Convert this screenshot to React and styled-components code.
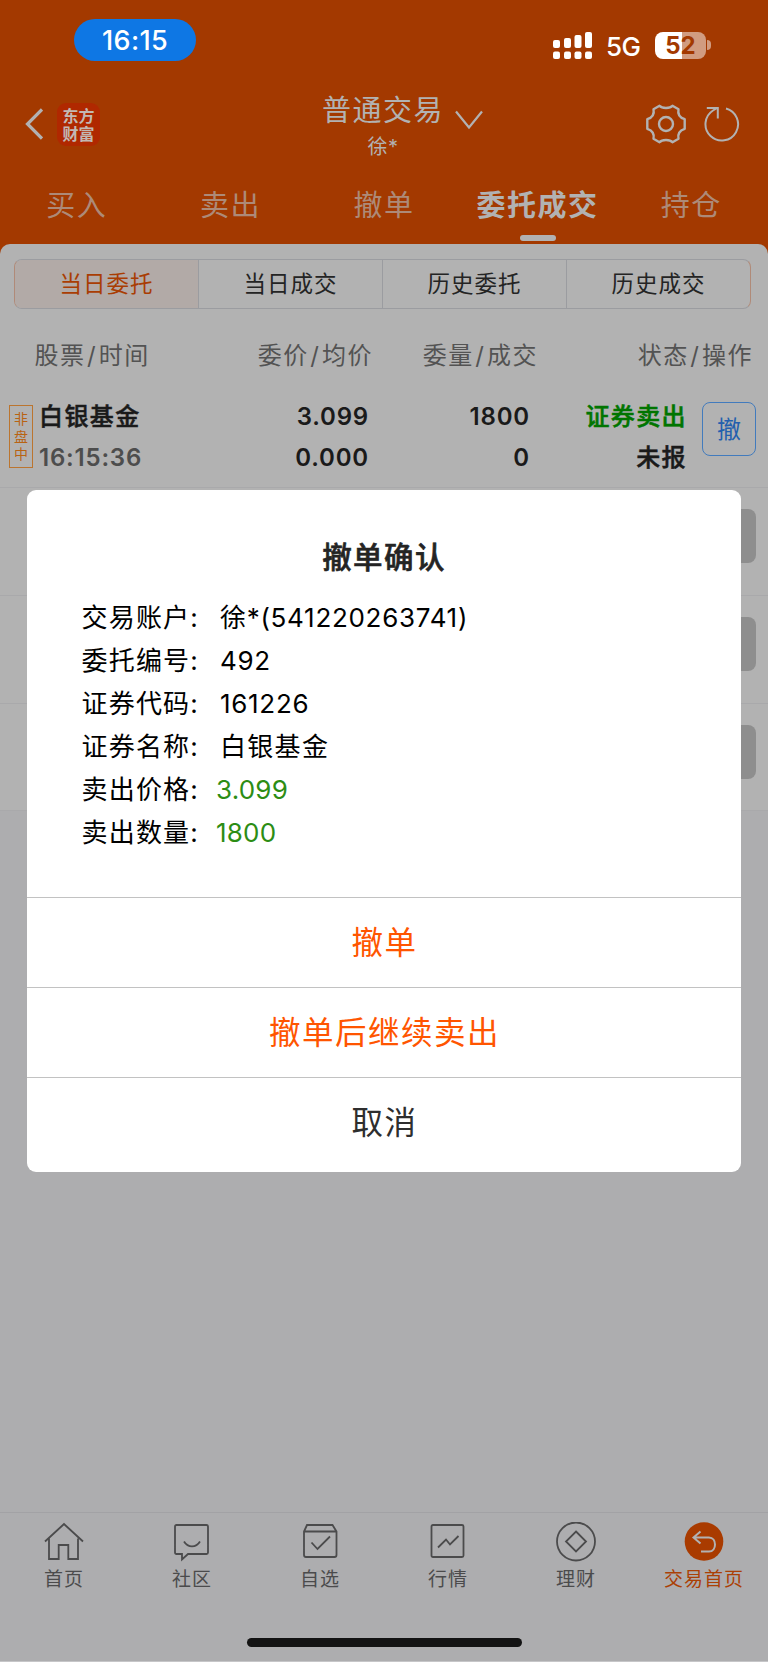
import React from 'react'
import styled, { createGlobalStyle } from 'styled-components';


const GlobalStyle = createGlobalStyle`
    * {
        box-sizing:border-box;
    }
    body {
        margin:0;
        font-family:Inter, "Noto Sans CJK SC", sans-serif;
        background-color:#adadaf;
    }
`;

const Container = styled.div`
    position:relative;
    width:768px;
    height:1662px;
    display:flex;
    flex-direction:column;
    overflow:hidden;
    background-color:#adadaf;
    border-bottom:1px solid #c6c6c8;
`;

const Header = styled.div`
    height:254px;
    flex-shrink:0;
    background-color:#a33900;
`;

const StatusBar = styled.div`
    height:80px;
    display:flex;
    justify-content:space-between;
    padding:19px 57px 0 74px;
    color:white;
`;

const Clock = styled.div`
    width:122px;
    height:42px;
    border-radius:21px;
    background-color:#0e77e4;
    display:flex;
    align-items:center;
    justify-content:center;
    font-size:27px;
    font-weight:500;
    letter-spacing:0.3px;
`;

const StatusRight = styled.div`
    display:flex;
    align-items:center;
    height:52px;
`;

const Network = styled.span`
    font-size:26px;
    font-weight:500;
    width:35px;
    margin:3px 14px 0 13px;
    letter-spacing:-0.5px;
    white-space:nowrap;
`;

const Battery = styled.div`
    width:51px;
    height:27px;
    border-radius:8px;
    background:linear-gradient(to right, white 53%, #d19c80 53%);
    color:#a33900;
    font-size:24px;
    font-weight:700;
    line-height:27px;
    text-align:center;
`;

const BatteryTip = styled.div`
    width:4px;
    height:10px;
    margin-left:1px;
    border-radius:0 5px 5px 0;
    background-color:#d19c80;
`;

const TopNav = styled.div`
    height:84px;
    display:grid;
    grid-template-columns:1fr auto 1fr;
    padding:0 28px 0 25px;
`;

const NavLeft = styled.div`
    display:flex;
    align-items:center;
    gap:14px;
    padding-top:4px;
`;

const Logo = styled.div`
    width:43px;
    height:43px;
    border-radius:9px;
    background-color:#b02800;
    color:#c2b8b3;
    font-family:"Noto Sans CJK SC", sans-serif;
    font-size:16px;
    font-weight:700;
    line-height:18px;
    padding-top:3px;
    text-align:center;
`;

const NavTitle = styled.div`
    display:flex;
    color:#b2b2b2;
    padding-left:40px;
`;

const TitleText = styled.div`
    text-align:center;
    font-size:29px;
    line-height:40px;
    letter-spacing:1.5px;
    padding-top:11px;
`;

const SubTitle = styled.div`
    font-size:20px;
    line-height:30px;
    margin-top:1px;
    letter-spacing:0.5px;
`;

const ChevronBox = styled.div`
    padding:30px 0 0 11px;
`;

const NavRight = styled.div`
    display:flex;
    align-items:center;
    justify-content:flex-end;
    gap:18px;
    padding-top:4px;
`;

const Tabs = styled.div`
    display:grid;
    grid-template-columns:repeat(5, 1fr);
    height:80px;
`;

const Tab = styled.div`
    display:flex;
    flex-direction:column;
    align-items:center;
    padding-top:18.5px;
    font-size:29px;
    line-height:46px;
    letter-spacing:1.5px;
    color:${props=>props.$active ? "#b2b2b2" : "#ad8a78"};
    font-weight:${props=>props.$active ? 700 : 400};
`;

const Indicator = styled.div`
    width:36px;
    height:6px;
    margin-top:6.5px;
    border-radius:3px;
    background-color:#b2b2b2;
`;

const Sheet = styled.div`
    display:flex;
    flex-direction:column;
    margin-top:-10px;
    padding-top:15px;
    height:567px;
    flex-shrink:0;
    border-radius:10px 10px 0 0;
    background-color:#b2b2b2;
`;

const Segments = styled.div`
    display:flex;
    height:50px;
    flex-shrink:0;
    margin:0 17px 0 14px;
    border:1px solid #9b9ca0;
    border-left-color:#b08a78;
    border-right-color:#b08a78;
    border-radius:8px;
    overflow:hidden;
`;

const Segment = styled.div`
    flex:1;
    font-size:22.5px;
    line-height:48px;
    letter-spacing:1px;
    text-align:center;
    color:${props=>props.$active ? "#a93d03" : "#242424"};
    background-color:${props=>props.$active ? "#b2aaa7" : "transparent"};
    border-left:${props=>props.$first ? "none" : "1px solid #9b9ca0"};
`;

const TableHead = styled.div`
    display:grid;
    grid-template-columns:175px 163.5px 165px 215px;
    height:71.5px;
    flex-shrink:0;
    padding:18.5px 0 0 34.5px;
    font-size:24px;
    line-height:56px;
    letter-spacing:1.5px;
    color:#535353;
    white-space:nowrap;
`;

const HeadCell = styled.div`
    text-align:${props=>props.$left ? "left" : "right"};
`;

const Slash = styled.span`
    margin:0 1.5px;
`;

const Orders = styled.div`
    flex-shrink:0;
`;

const Order = styled.div`
    display:grid;
    grid-template-columns:24px 150px 185px 161px 157px 70px;
    height:107.7px;
    padding-left:9px;
    border-bottom:1px solid #a9a9ab;
`;

const Phase = styled.div`
    width:24px;
    height:63px;
    margin-top:24px;
    padding-top:4.5px;
    border:1.5px solid #bb752f;
    color:#b96312;
    font-size:14px;
    line-height:17.5px;
    text-align:center;
`;

const Cell = styled.div`
    padding-top:15px;
    padding-left:${props=>props.$left ? "6px" : "0"};
    text-align:${props=>props.$left ? "left" : "right"};
    white-space:nowrap;
`;

const Value = styled.div`
    height:41px;
    line-height:41px;
    font-size:24px;
    font-weight:${props=>props.$cjk ? 500 : 600};
    -webkit-text-stroke:${props=>props.$cjk ? "0.5px" : "0"};
    letter-spacing:${props=>props.$cjk ? "1.4px" : "0.8px"};
    margin-right:-1px;
    color:${props=>props.$color || "#1a1a1a"};
`;

const CancelButton = styled.button`
    width:54px;
    height:54px;
    margin:21px 0 0 16px;
    padding:0 0 2px;
    border-radius:8px;
    border:${props=>props.$disabled ? "none" : "1.5px solid #427bbd"};
    background-color:${props=>props.$disabled ? "#8e8e8e" : "transparent"};
    color:#235fae;
    font-family:inherit;
    font-size:24px;
`;

const Dialog = styled.div`
    position:absolute;
    top:490px;
    left:27px;
    width:714px;
    height:682px;
    border-radius:9px;
    background-color:white;
    overflow:hidden;
`;

const DialogBody = styled.div`
    height:407px;
    padding:44px 54.5px 0;
`;

const DialogTitle = styled.div`
    height:62px;
    line-height:46px;
    text-align:center;
    font-size:29.5px;
    font-weight:500;
    -webkit-text-stroke:0.6px;
    letter-spacing:1.4px;
    color:#242424;
`;

const Detail = styled.div`
    display:flex;
    height:43.1px;
    line-height:43px;
    font-size:26px;
    color:black;
`;

const DetailLabel = styled.span`
    width:${props=>props.$narrow ? "134.5px" : "138.5px"};
    letter-spacing:1.2px;
`;

const DetailValue = styled.span`
    letter-spacing:${props=>props.$cjk ? "1.3px" : props.$sell ? "0.2px" : "0.7px"};
    color:${props=>props.$sell ? "#2c8d14" : "black"};
`;

const Action = styled.div`
    height:89.8px;
    border-top:1px solid #c2c2c2;
    text-align:center;
    font-size:31.5px;
    line-height:89px;
    letter-spacing:1.5px;
    padding-left:1px;
    color:${props=>props.$plain ? "#2e2e2e" : "#ff5500"};
`;

const Footer = styled.div`
    margin-top:auto;
    height:149px;
    flex-shrink:0;
    border-top:1.5px solid #a2a2a5;
`;

const FooterItems = styled.div`
    display:grid;
    grid-template-columns:repeat(6, 1fr);
    height:125px;
`;

const FooterItem = styled.div`
    display:flex;
    flex-direction:column;
    align-items:center;
    padding-top:8.5px;
    font-size:19px;
    line-height:28px;
    letter-spacing:1px;
    color:${props=>props.$active ? "#ab4005" : "#4b4b4c"};
    svg {
        margin-bottom:4px;
    }
`;

const HomeBar = styled.div`
    width:275px;
    height:9px;
    margin:0 auto;
    border-radius:5px;
    background-color:#131313;
`;

const SignalIcon = () => (
    <svg width="40" height="28" viewBox="0 0 40 28" fill="white">
        <rect x="0" y="9" width="7" height="8" rx="2"/>
        <rect x="11" y="7" width="7" height="10" rx="2"/>
        <rect x="21.5" y="4" width="7" height="13" rx="2"/>
        <rect x="32" y="1" width="7" height="16" rx="2"/>
        <rect x="0" y="20.5" width="7" height="7.5" rx="2"/>
        <rect x="11" y="20.5" width="7" height="7.5" rx="2"/>
        <rect x="21.5" y="20.5" width="7" height="7.5" rx="2"/>
        <rect x="32" y="20.5" width="7" height="7.5" rx="2"/>
    </svg>
);

const BackIcon = () => (
    <svg width="18" height="32" viewBox="0 0 18 32" fill="none" stroke="#b2b2b2" strokeWidth="3.2">
        <path d="M17 1.5 2.5 16 17 30.5"/>
    </svg>
);

const ChevronIcon = () => (
    <svg width="28" height="20" viewBox="0 0 28 20" fill="none" stroke="#b2b2b2" strokeWidth="2.2">
        <path d="M1 1.5 14 17.5 27 1.5"/>
    </svg>
);

const GearIcon = () => (
    <svg width="40" height="40" viewBox="0 0 40 40" fill="none" stroke="#b2b2b2" strokeWidth="2.4" strokeLinejoin="round">
        <path d="M13.5 1.8C16 4.8 24 4.8 26.5 1.8L32.5 5.2C31.5 10 33.5 13.5 38.7 15.2V24.8C33.5 26.5 31.5 30 32.5 34.8L26.5 38.2C24 35.2 16 35.2 13.5 38.2L7.5 34.8C8.5 30 6.5 26.5 1.3 24.8V15.2C6.5 13.5 8.5 10 7.5 5.2Z"/>
        <circle cx="20" cy="20" r="7"/>
    </svg>
);

const RefreshIcon = () => (
    <svg width="36" height="36" viewBox="0 0 36 36" fill="none" stroke="#b2b2b2" strokeWidth="2">
        <path d="M22 2.5A16.3 16.3 0 1 1 9 4.5L13.2 2"/>
        <path d="M2.8 2H13.8V12.5"/>
    </svg>
);

const icons = {
    home: <path d="M1 19.5 20 2l19 17.5M5 16.5V37h9.7V23h9.6v14h9.7V16.5"/>,
    community: <path d="M4.5 3h30q1.5 0 1.5 1.5v26q0 1.5-1.5 1.5H16l-6 5.5V32H4.5Q3 32 3 30.5V4.5Q3 3 4.5 3ZM12 19.5c4 6.5 12 6.5 16 0"/>,
    watch: <path d="M7 3h25.5L36.5 9.5V33q0 2-2 2h-28.5q-2 0-2-2V9.5ZM4 9.5h32.5M11.5 20.5l6 6.5 12.5-12.5"/>,
    market: <path d="M5 3h29q1.5 0 1.5 1.5v29q0 1.5-1.5 1.5H5q-1.5 0-1.5-1.5V4.5Q3.5 3 5 3ZM10 25.5l8-8 4 5L30.5 14"/>,
    wealth: <path d="M39 19.5a19 19 0 1 1-38 0 19 19 0 1 1 38 0ZM20 9.5l10 10-10 10-10-10Z"/>,
};

const FooterIcon = ({ name }) => (
    name === "trade" ? (
        <svg width="40" height="40" viewBox="0 0 40 40" fill="none">
            <circle cx="20" cy="19.5" r="19.3" fill="#a93b00"/>
            <path d="M16.5 9.500 9.500 15.500l7 6M9.500 15.500h15.500c8 0 8 14 0 14h-8" stroke="#b2b2b2" strokeWidth="2"/>
        </svg>
    ) : (
        <svg width="40" height="40" viewBox="0 0 40 40" fill="none" stroke="#4b4b4c" strokeWidth="1.8">
            {icons[name]}
        </svg>
    )
);

const tabs = ["买入", "卖出", "撤单", "委托成交", "持仓"];
const segments = ["当日委托", "当日成交", "历史委托", "历史成交"];
const columns = [["股票", "时间"], ["委价", "均价"], ["委量", "成交"], ["状态", "操作"]];
const details = [
    { label: "交易账户:", value: "徐*(541220263741)" },
    { label: "委托编号:", value: "492" },
    { label: "证券代码:", value: "161226" },
    { label: "证券名称:", value: "白银基金", cjk: true },
    { label: "卖出价格:", value: "3.099", sell: true },
    { label: "卖出数量:", value: "1800", sell: true },
];
const footerItems = [
    { icon: "home", label: "首页" },
    { icon: "community", label: "社区" },
    { icon: "watch", label: "自选" },
    { icon: "market", label: "行情" },
    { icon: "wealth", label: "理财" },
    { icon: "trade", label: "交易首页" },
];

const EmptyOrder = () => (
    <Order>
        <span/><span/><span/><span/><span/>
        <CancelButton $disabled/>
    </Order>
);

const App = () => {
  return (
      <Container>
      <GlobalStyle/>
                <Header>
                    <StatusBar>
                        <Clock>16:15</Clock>
                        <StatusRight>
                            <SignalIcon/>
                            <Network>5G</Network>
                            <Battery>52</Battery>
                            <BatteryTip/>
                        </StatusRight>
                    </StatusBar>
                    <TopNav>
                        <NavLeft>
                            <BackIcon/>
                            <Logo>东方<br/>财富</Logo>
                        </NavLeft>
                        <NavTitle>
                            <TitleText>
                                普通交易
                                <SubTitle>徐*</SubTitle>
                            </TitleText>
                            <ChevronBox><ChevronIcon/></ChevronBox>
                        </NavTitle>
                        <NavRight>
                            <GearIcon/>
                            <RefreshIcon/>
                        </NavRight>
                    </TopNav>
                    <Tabs>
                        {tabs.map(tab=>(
                            <Tab key={tab} $active={tab === "委托成交"}>
                                {tab}
                                {tab === "委托成交" && <Indicator/>}
                            </Tab>
                        ))}
                    </Tabs>
                </Header>
                <Sheet>
                    <Segments>
                        {segments.map((segment, i)=>(
                            <Segment key={segment} $active={i === 0} $first={i === 0}>{segment}</Segment>
                        ))}
                    </Segments>
                    <TableHead>
                        {columns.map(([top, bottom], i)=>(
                            <HeadCell key={top} $left={i === 0}>{top}<Slash>/</Slash>{bottom}</HeadCell>
                        ))}
                    </TableHead>
                    <Orders>
                        <Order>
                            <Phase>非<br/>盘<br/>中</Phase>
                            <Cell $left>
                                <Value $cjk>白银基金</Value>
                                <Value $color="#4d4d4d">16:15:36</Value>
                            </Cell>
                            <Cell>
                                <Value>3.099</Value>
                                <Value>0.000</Value>
                            </Cell>
                            <Cell>
                                <Value>1800</Value>
                                <Value>0</Value>
                            </Cell>
                            <Cell>
                                <Value $cjk $color="#007500">证券卖出</Value>
                                <Value $cjk>未报</Value>
                            </Cell>
                            <CancelButton>撤</CancelButton>
                        </Order>
                        <EmptyOrder/>
                        <EmptyOrder/>
                        <EmptyOrder/>
                    </Orders>
                </Sheet>
                <Footer>
                    <FooterItems>
                        {footerItems.map(item=>(
                            <FooterItem key={item.icon} $active={item.icon === "trade"}>
                                <FooterIcon name={item.icon}/>
                                {item.label}
                            </FooterItem>
                        ))}
                    </FooterItems>
                    <HomeBar/>
                </Footer>
                <Dialog>
                    <DialogBody>
                        <DialogTitle>撤单确认</DialogTitle>
                        {details.map(detail=>(
                            <Detail key={detail.label}>
                                <DetailLabel $narrow={detail.sell}>{detail.label}</DetailLabel>
                                <DetailValue $cjk={detail.cjk} $sell={detail.sell}>{detail.value}</DetailValue>
                            </Detail>
                        ))}
                    </DialogBody>
                    <Action>撤单</Action>
                    <Action>撤单后继续卖出</Action>
                    <Action $plain>取消</Action>
                </Dialog>
      </Container>
  )
}

export default App
